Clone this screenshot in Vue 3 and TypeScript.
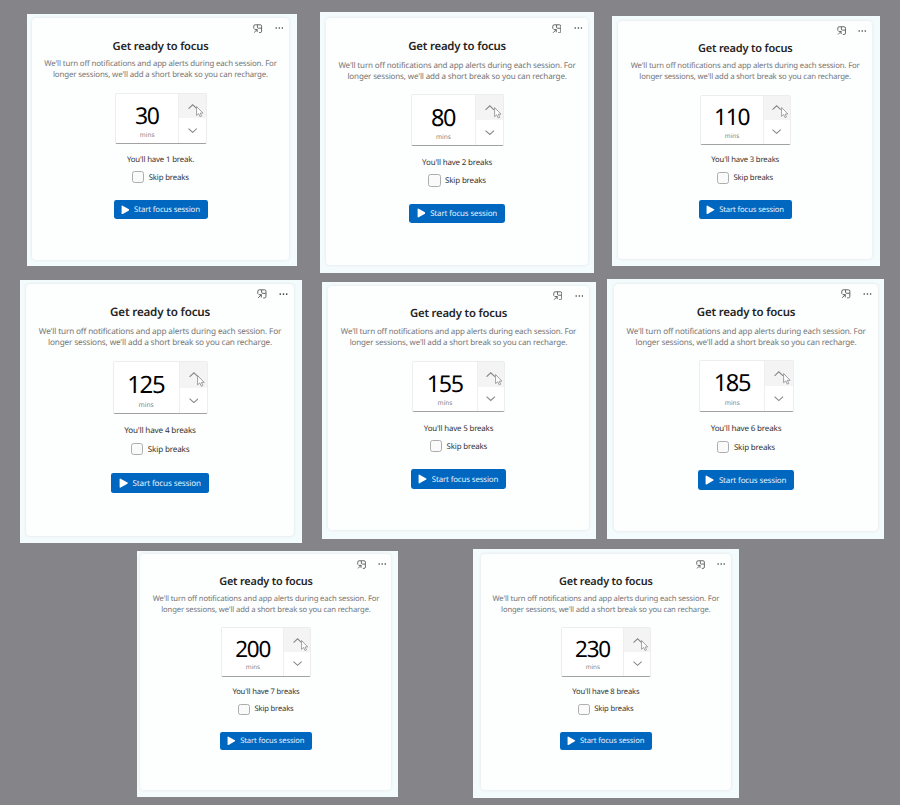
<script setup lang="ts">
interface Tile {
  minutes: number
  breaks: string
  scale: number
  // outer window: left gap to the previous one, top gap in the row, size
  gap: number
  top: number
  width: number
  height: number
  // insets of the card inside the window: top, right, bottom, left
  inset: [number, number, number, number]
}

const rows: Tile[][] = [
  [
    { minutes: 30, breaks: "You'll have 1 break.", scale: 1, gap: 27, top: 14, width: 270, height: 252, inset: [3.3, 7.3, 5, 4.3] },
    { minutes: 80, breaks: "You'll have 2 breaks", scale: 1.02, gap: 23, top: 12.4, width: 274, height: 260.4, inset: [4.9, 4.9, 7, 5.1] },
    { minutes: 110, breaks: "You'll have 3 breaks", scale: 0.986, gap: 18.4, top: 16, width: 267.6, height: 249.8, inset: [4.1, 6.8, 5.4, 4.8] },
  ],
  [
    { minutes: 125, breaks: "You'll have 4 breaks", scale: 1.0415, gap: 20, top: 4, width: 282.4, height: 262.6, inset: [2.5, 7.4, 6, 5.1] },
    { minutes: 155, breaks: "You'll have 5 breaks", scale: 1.0115, gap: 19.4, top: 5.7, width: 274.2, height: 257.8, inset: [2.9, 6.1, 8.6, 5.4] },
    { minutes: 185, breaks: "You'll have 6 breaks", scale: 1.027, gap: 11.4, top: 3, width: 276.8, height: 260.4, inset: [3.6, 5.5, 7, 6] },
  ],
  [
    { minutes: 200, breaks: "You'll have 7 breaks", scale: 0.9757, gap: 136.7, top: 4.7, width: 261.6, height: 246, inset: [2.7, 5.8, 5.4, 2.8] },
    { minutes: 230, breaks: "You'll have 8 breaks", scale: 0.9757, gap: 75, top: 3, width: 265.7, height: 248.7, inset: [4.4, 6.9, 6.7, 6.3] },
  ],
]

const tileStyle = (t: Tile) => ({
  '--u': `${t.scale}px`,
  width: `${t.width}px`,
  height: `${t.height}px`,
  marginLeft: `${t.gap}px`,
  marginTop: `${t.top}px`,
  padding: t.inset.map((n) => `${n}px`).join(' '),
})
</script>

<template>
  <main class="board">
    <div v-for="(row, i) in rows" :key="i" class="row">
      <section v-for="t in row" :key="t.minutes" class="tile" :style="tileStyle(t)">
        <div class="card">
          <div class="tools">
            <svg class="pop" viewBox="0 0 18 18" fill="none" stroke="#555" stroke-width="1.7">
              <path d="M1.500 9V4.200A2.700 2.700 0 0 1 4.200 1.500H13.800A2.700 2.700 0 0 1 16.500 4.200V13.800A2.700 2.700 0 0 1 13.800 16.500H11.500" />
              <path d="M8.500 2V6A2 2 0 0 0 10.500 8H16" />
              <path d="M2 16.500L8 10.500M3 10.500H8V15.500" />
            </svg>
            <svg class="dots" viewBox="0 0 18 4" fill="#3c3c3c">
              <circle cx="2.500" cy="2" r="1.700" />
              <circle cx="9" cy="2" r="1.700" />
              <circle cx="15.500" cy="2" r="1.700" />
            </svg>
          </div>
          <h2 class="title">Get ready to focus</h2>
          <p class="lead">
            We'll turn off notifications and app alerts during each session. For<br />
            longer sessions, we'll add a short break so you can recharge.
          </p>
          <div class="picker">
            <div class="value">
              <span class="num">{{ t.minutes }}</span>
              <span class="unit">mins</span>
            </div>
            <div class="steps">
              <div class="step hover">
                <svg class="chev" viewBox="0 0 18 10" fill="none" stroke="#858585" stroke-width="2">
                  <path d="M1 9L9 1.500L17 9" />
                </svg>
                <svg class="cursor" viewBox="0 0 14 22" fill="#fff" stroke="#8a8a90" stroke-width="1.500" stroke-linejoin="round">
                  <path d="M1 1V18L5 14.500L7.800 20.500L10.500 19.200L7.900 13.500H13Z" />
                </svg>
              </div>
              <div class="step">
                <svg class="chev" viewBox="0 0 18 10" fill="none" stroke="#858585" stroke-width="2">
                  <path d="M1 1L9 8.500L17 1" />
                </svg>
              </div>
            </div>
          </div>
          <p class="breaks">{{ t.breaks }}</p>
          <label class="skip"><span class="box"></span><span class="skip-text">Skip breaks</span></label>
          <button class="start" type="button">
            <svg class="play" viewBox="0 0 16 18" fill="#fff">
              <path d="M1 2.200A1.200 1.200 0 0 1 2.800 1.200L14.800 8A1.200 1.200 0 0 1 14.800 10L2.800 16.800A1.200 1.200 0 0 1 1 15.800Z" />
            </svg>
            <span class="start-text">Start focus session</span>
          </button>
        </div>
      </section>
    </div>
  </main>
</template>

<style>
body {
  background: #858589;
}
</style>

<style scoped>
.board {
  display: grid;
  grid-template-rows: 276px 270px 259px;
  width: 900px;
  height: 805px;
  overflow: hidden;
  background: #858589;
  font-family: 'Noto Sans', 'Open Sans', sans-serif;
  text-rendering: geometricPrecision;
  color: #333;
}
.row {
  display: flex;
  align-items: flex-start;
}
.tile {
  box-sizing: border-box;
  flex: none;
  background: #f4fbfc;
}
.card {
  position: relative;
  box-sizing: border-box;
  height: 100%;
  display: flex;
  flex-direction: column;
  align-items: center;
  padding-top: calc(var(--u) * 22.6);
  border-radius: calc(var(--u) * 5);
  background: #fdfefe;
  box-shadow: inset 0 0 0 1px #edf2f4, 0 0 2px #e6edef;
}
.tools {
  position: absolute;
  top: calc(var(--u) * 6);
  right: calc(var(--u) * 6.6);
  height: calc(var(--u) * 10);
  display: flex;
  align-items: center;
  gap: calc(var(--u) * 12);
}
.pop {
  width: calc(var(--u) * 9.4);
  height: calc(var(--u) * 9.4);
}
.dots {
  width: calc(var(--u) * 8.6);
  height: calc(var(--u) * 2);
}
.title {
  margin: 0;
  height: calc(var(--u) * 14);
  line-height: calc(var(--u) * 14);
  font-size: calc(var(--u) * 11.15);
  letter-spacing: -0.016em;
  font-weight: 600;
  white-space: nowrap;
  color: #242424;
}
.lead {
  margin: calc(var(--u) * 5.3) 0 0;
  font-size: calc(var(--u) * 7.9);
  letter-spacing: -0.019em;
  line-height: calc(var(--u) * 10.8);
  text-align: center;
  white-space: nowrap;
  color: #757575;
}
.picker {
  box-sizing: border-box;
  margin: calc(var(--u) * 12.2) 0 0 calc(var(--u) * 0.7);
  display: flex;
  width: calc(var(--u) * 92);
  height: calc(var(--u) * 50.6);
  border: 1px solid #ededed;
  border-bottom: 1.5px solid #a2a2a2;
  border-radius: calc(var(--u) * 2);
  background: #fff;
}
.value {
  flex: 1;
  display: flex;
  flex-direction: column;
  align-items: center;
  padding-top: calc(var(--u) * 7.9);
}
.num {
  height: calc(var(--u) * 26);
  line-height: calc(var(--u) * 26);
  margin-right: calc(var(--u) * 0.7);
  font-size: calc(var(--u) * 23);
  letter-spacing: -0.055em;
  color: #000;
}
.unit {
  height: calc(var(--u) * 10);
  line-height: calc(var(--u) * 13.2);
  font-size: calc(var(--u) * 6.4);
  color: #858585;
}
.steps {
  width: calc(var(--u) * 27.4);
  box-sizing: border-box;
  border-left: 1px solid #efefef;
  display: flex;
  flex-direction: column;
}
.step {
  position: relative;
  flex: 1;
  display: flex;
  align-items: center;
  justify-content: center;
}
.hover {
  background: #f4f4f4;
}
.chev {
  width: calc(var(--u) * 9.4);
  height: calc(var(--u) * 5.2);
}
.cursor {
  position: absolute;
  left: calc(var(--u) * 17);
  top: calc(var(--u) * 11.8);
  width: calc(var(--u) * 7.5);
  height: calc(var(--u) * 11.6);
}
.breaks {
  margin: calc(var(--u) * 10.4) 0 0;
  height: calc(var(--u) * 12);
  line-height: calc(var(--u) * 12);
  font-size: calc(var(--u) * 7.8);
  letter-spacing: -0.02em;
  white-space: nowrap;
}
.skip {
  margin-top: calc(var(--u) * 5.3);
  height: calc(var(--u) * 12);
  display: flex;
  align-items: center;
  gap: calc(var(--u) * 4.5);
  font-size: calc(var(--u) * 7.8);
  letter-spacing: -0.02em;
  line-height: calc(var(--u) * 12);
  white-space: nowrap;
}
.skip-text {
  padding-top: calc(var(--u) * 1.8);
}
.box {
  box-sizing: border-box;
  width: calc(var(--u) * 12);
  height: calc(var(--u) * 12);
  flex: none;
  border: 1px solid #adadad;
  border-radius: calc(var(--u) * 2.6);
  background: #fafafa;
}
.start {
  box-sizing: border-box;
  margin-top: calc(var(--u) * 16.8);
  width: calc(var(--u) * 94);
  height: calc(var(--u) * 19);
  padding: 0 0 0 calc(var(--u) * 7.2);
  display: flex;
  align-items: center;
  gap: calc(var(--u) * 4.6);
  border: 0;
  border-radius: calc(var(--u) * 2.4);
  background: #0067c0;
  color: #e8f2fb;
  font-family: inherit;
  font-size: calc(var(--u) * 7.8);
  letter-spacing: -0.018em;
  text-rendering: inherit;
  white-space: nowrap;
}
.start-text {
  padding-top: calc(var(--u) * 1);
}
.play {
  width: calc(var(--u) * 8.8);
  height: calc(var(--u) * 9.8);
}
</style>
